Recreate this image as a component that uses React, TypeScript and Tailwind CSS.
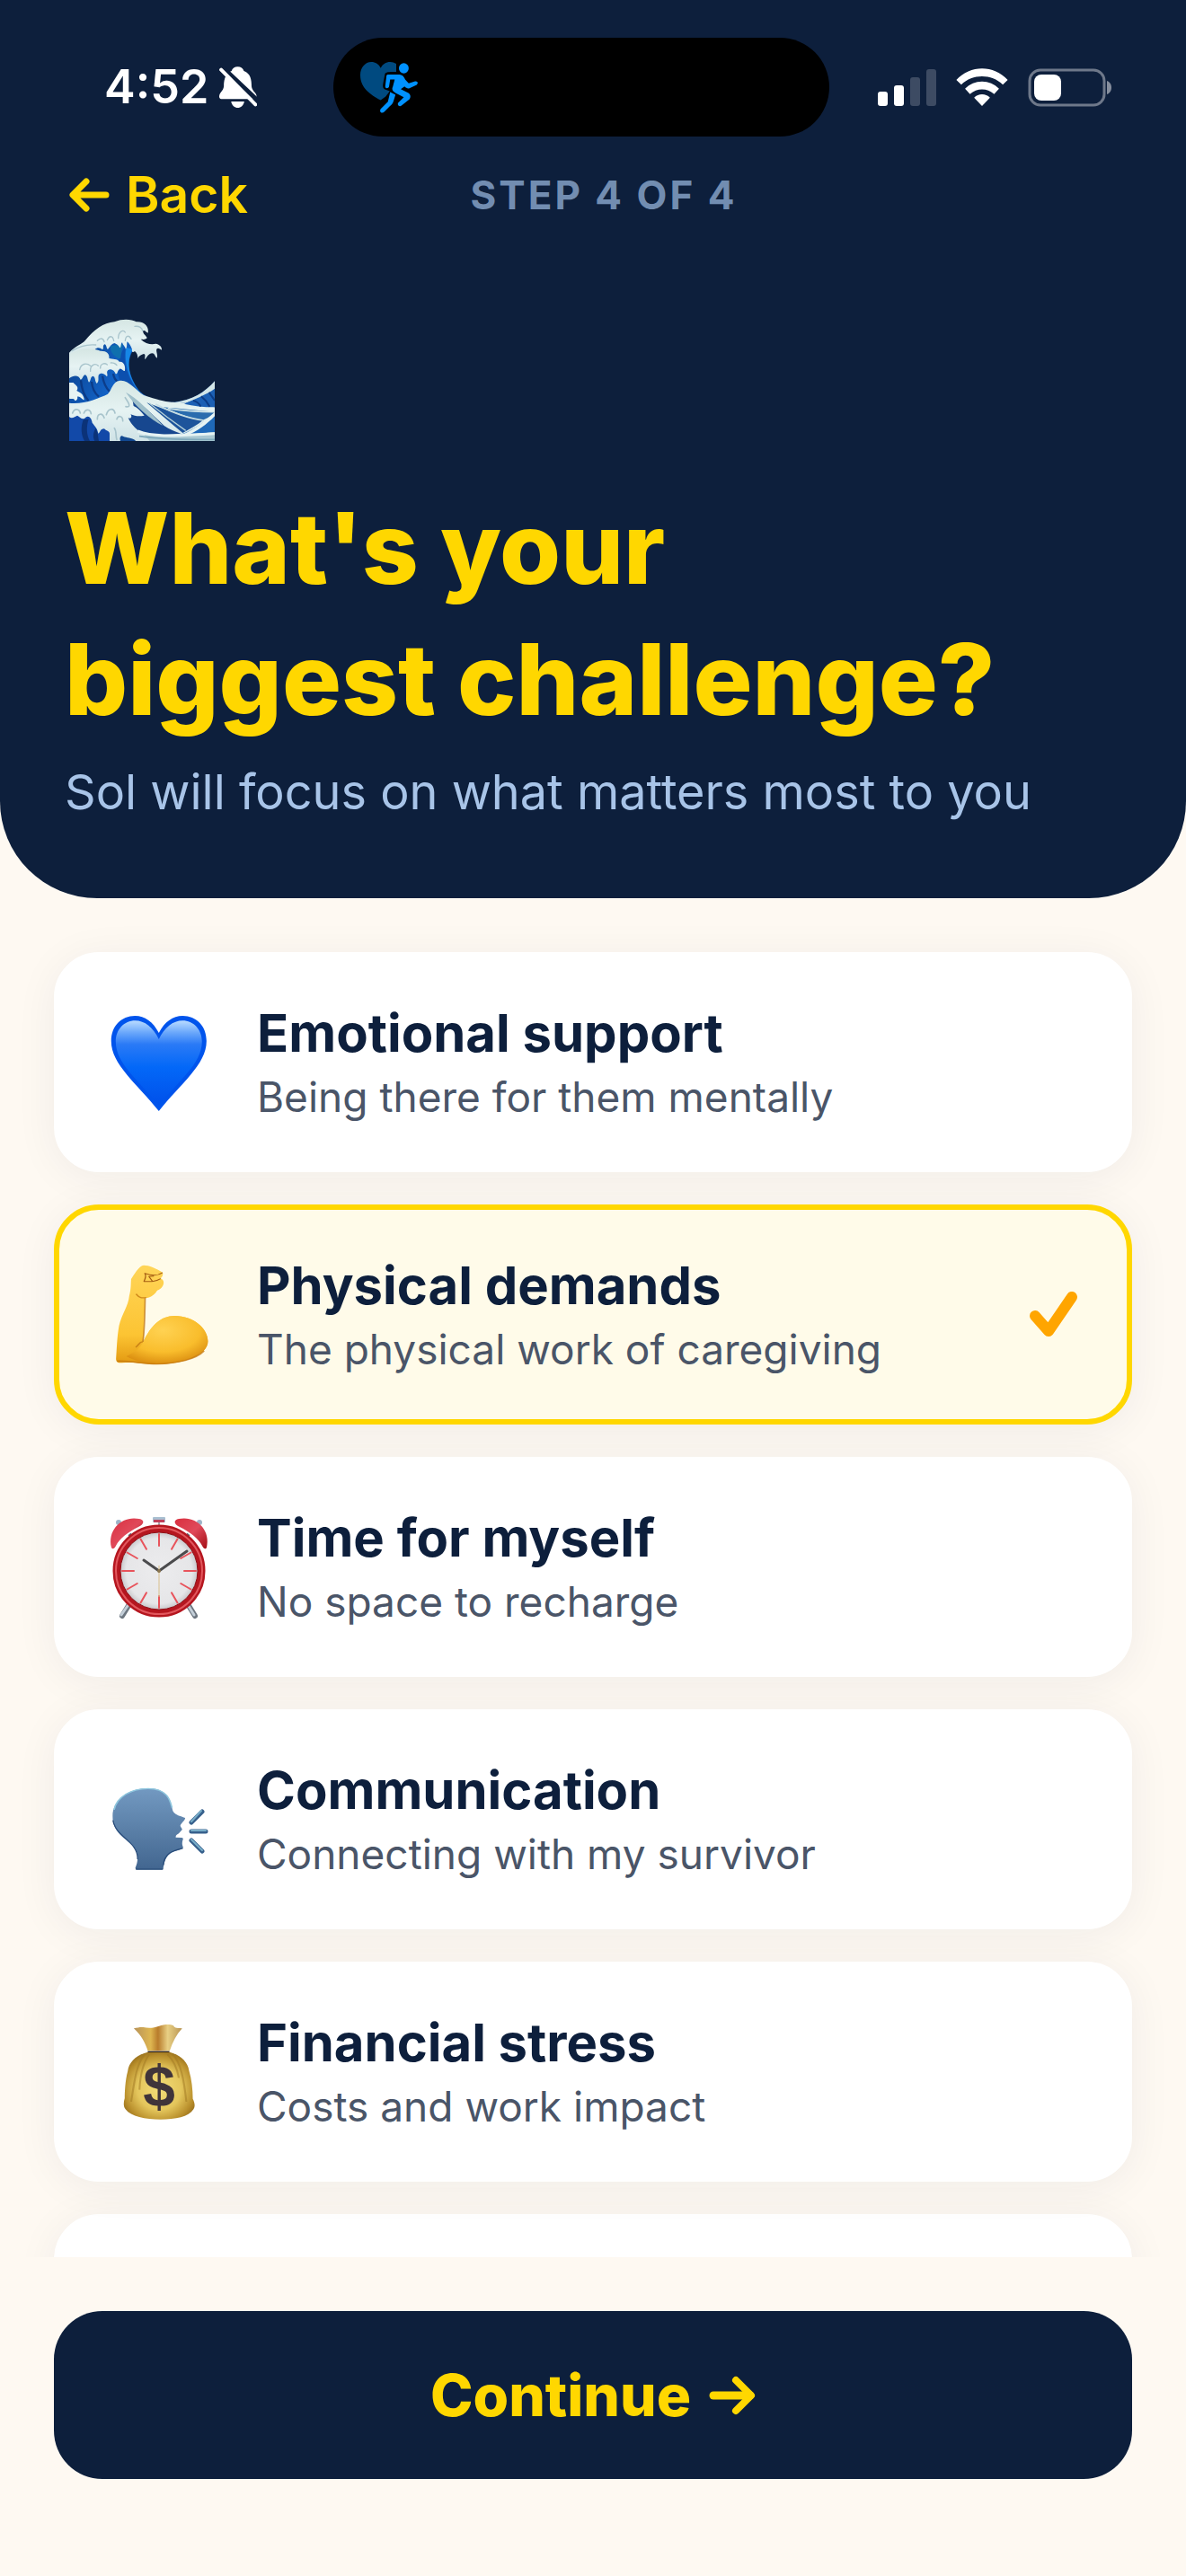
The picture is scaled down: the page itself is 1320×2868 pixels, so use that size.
import React, { useState } from "react";

type Challenge = {
  id: string;
  title: string;
  subtitle: string;
  icon: React.ReactNode;
};

const SilentBellIcon = () => (
  <svg width="42" height="46" viewBox="580 225 98 138" preserveAspectRatio="none" aria-hidden="true">
    <path
      d="M628 226C620 226 614 231 612 240C594 249 592 275 592 290C591 308 580 310 580 326C580 331 583 334 588 334H668C674 334 678 331 677 325C677 312 665 308 664 292C664 270 662 249 644 240C642 231 636 226 628 226Z"
      fill="#fff"
    />
    <path d="M611 342H645C643 356 636 363 628 363C620 363 613 356 611 342Z" fill="#fff" />
    <path d="M584 222L684 344" stroke="#0d1f3c" strokeWidth="5" vectorEffect="non-scaling-stroke" />
    <path
      d="M585 236L674 352"
      stroke="#fff"
      strokeWidth="4"
      strokeLinecap="round"
      vectorEffect="non-scaling-stroke"
    />
  </svg>
);

const WorkoutIcon = () => (
  <svg width="64" height="57" viewBox="953 203 152 170" preserveAspectRatio="none" aria-hidden="true">
    <path
      d="M1007 223C1002 210 993 203 982 203C966 203 953 222 953 246C953 290 980 311 1007 330L1020 318L1031 300L1018 294C1012 290 1012 282 1014 270L1018 244C1019 237 1026 235 1048 236V209C1043 205 1038 203 1032 203C1021 203 1012 210 1007 223Z"
      fill="#004a80"
    />
    <ellipse cx="1068" cy="224" rx="13" ry="17" fill="#0091ff" />
    <path
      d="M1026 245H1056C1066 246 1069 255 1072 262L1081 274L1098 267C1105 266 1107 274 1102 279L1083 290C1078 292 1074 289 1070 284L1060 293L1080 306C1086 311 1087 319 1083 327L1062 348C1056 353 1050 346 1053 339L1068 320L1046 306C1037 300 1036 292 1039 285L1044 261H1032L1029 285C1027 292 1018 292 1019 283L1022 252C1022 248 1023 245 1026 245Z"
      fill="#0091ff"
    />
    <path
      d="M1032 303L1046 312L1041 332C1039 341 1036 345 1031 350L1017 368C1010 377 1002 368 1007 359L1026 335Z"
      fill="#0091ff"
    />
  </svg>
);

const SignalIcon = () => (
  <svg width="65" height="41" viewBox="0 0 65 41" aria-hidden="true">
    <rect x="0" y="25" width="11" height="16" rx="3" fill="#fff" />
    <rect x="18" y="18" width="11" height="23" rx="3" fill="#fff" />
    <rect x="36" y="9" width="11" height="32" rx="3" fill="#3d4b63" />
    <rect x="54" y="0" width="11" height="41" rx="3" fill="#3d4b63" />
  </svg>
);

const WifiIcon = () => (
  <svg width="58" height="42" viewBox="961 225 138 126" preserveAspectRatio="none" aria-hidden="true">
    <g fill="#fff">
      <path d="M962 264C999 213 1061 213 1098 264L1085 280C1055 243 1005 243 975 280Z" />
      <path d="M985 293C1009 261 1051 261 1075 293L1062 311C1043 290 1017 290 998 311Z" />
      <path d="M1009 323C1020 308 1040 308 1051 323L1030 351Z" />
    </g>
  </svg>
);

const BatteryIcon = () => (
  <svg width="94" height="43" viewBox="0 0 94 43" aria-hidden="true">
    <rect x="2" y="2" width="83" height="39" rx="12" fill="none" stroke="#6e788a" strokeWidth="3" />
    <rect x="7" y="7" width="30" height="29" rx="8" fill="#fff" />
    <path d="M88 14C91 15 93 18 93 21.500C93 25 91 28 88 29Z" fill="#868e9d" />
  </svg>
);

const WaveIcon = () => (
  <svg width="162" height="136" viewBox="111 105 486 408" aria-hidden="true">
    <defs>
      <linearGradient id="waveDeep" x1="0" y1="0" x2="1" y2="0.400">
        <stop offset="0" stopColor="#0b3f88" />
        <stop offset="0.400" stopColor="#1261c4" />
        <stop offset="1" stopColor="#164e9e" />
      </linearGradient>
      <linearGradient id="waveFoam" x1="0" y1="0" x2="0" y2="1">
        <stop offset="0" stopColor="#d5e6e3" />
        <stop offset="0.500" stopColor="#e6f3f3" />
        <stop offset="1" stopColor="#cfe2e6" />
      </linearGradient>
    </defs>
    <path
      d="M111 230L200 170L300 175L328 205C302 240 304 290 345 345C380 380 430 385 462 383C520 378 565 350 597 313V513H111Z"
      fill="url(#waveDeep)"
    />
    <path d="M300 195C288 250 305 310 352 358C322 335 300 320 282 314C265 280 275 225 300 195Z" fill="#0c4fae" />
    <path d="M322 208C302 245 304 295 350 355C322 325 290 260 302 200Z" fill="#1687e6" />
    <path d="M250 195C245 215 262 235 282 238L290 190Z" fill="#0f6fae" />
    <g fill="none" stroke="#0a2f74" strokeWidth="7" opacity="0.700">
      <path d="M150 310C152 335 160 360 175 378" />
      <path d="M186 315C188 340 198 355 210 365" />
      <path d="M222 296C226 320 236 338 246 348" />
      <path d="M258 288C260 300 266 310 272 314" />
    </g>
    <path
      d="M111 218C130 198 150 190 162 180C195 140 225 118 262 115C290 103 320 106 335 115C362 113 378 130 374 152C368 150 365 142 358 144C355 155 368 160 371 169C364 176 356 173 350 173C365 188 385 192 400 188C412 190 421 198 420 209C414 206 408 200 403 206C400 214 408 224 404 236C397 231 397 220 388 220C376 221 373 230 364 241C362 232 368 225 360 222C352 225 344 228 340 237C340 226 337 219 330 213C324 219 319 216 321 207C317 195 312 188 305 181C302 190 306 198 300 206C297 196 290 193 288 184C282 188 286 198 280 202C276 193 268 188 262 186C252 188 246 200 240 207C234 202 237 192 229 190C221 195 228 203 222 208C215 200 204 200 197 207L160 235L111 235Z"
      fill="url(#waveFoam)"
    />
    <path
      d="M111 225C140 202 190 202 215 212C235 211 247 222 244 236C255 241 272 236 279 249C290 246 300 260 297 278C291 283 288 270 280 272C270 279 275 288 266 289C262 278 253 270 241 276C233 283 242 292 237 298C228 286 215 284 209 293C207 305 212 312 203 321C195 311 200 299 190 296C181 298 184 312 177 317C171 308 174 296 164 292C155 295 158 306 149 308C144 294 128 290 111 304Z"
      fill="url(#waveFoam)"
    />
    <path
      d="M111 318L125 318C130 325 146 332 136 345C146 350 160 356 161 376C151 373 148 362 138 365C141 372 135 379 130 378C127 368 118 374 111 371Z"
      fill="#e6f3f3"
    />
    <g fill="none" stroke="#a8c4cc" strokeWidth="4" strokeLinecap="round">
      <path d="M205 178C215 168 225 168 228 182M238 176C245 160 256 160 260 178M275 170C275 150 290 138 298 150M298 178C300 160 310 158 318 172" />
      <path d="M146 275C150 255 168 250 182 262M182 280C180 262 196 250 208 262M215 270C214 256 228 250 238 258M250 252C256 250 266 254 270 260" />
      <path d="M120 212C145 196 175 190 200 192M330 130C345 128 355 135 356 145" />
    </g>
    <path
      d="M111 386C160 392 210 370 240 356C256 338 256 311 285 311C312 312 332 342 360 360C420 380 440 384 480 384L597 400V513H111Z"
      fill="url(#waveFoam)"
    />
    <path
      d="M111 432C120 440 130 432 138 428C148 432 155 446 166 434C176 426 186 436 188 452C198 466 205 470 208 488C216 484 214 472 228 472C236 482 248 478 246 492V513H111Z"
      fill="#1249a8"
    />
    <path d="M158 442C148 470 152 495 162 513H180C168 490 168 465 176 440ZM200 470C190 485 190 500 196 513H210L206 488Z" fill="#0b3278" />
    <path d="M282 513C278 500 284 492 292 498C302 502 320 502 332 511V513Z" fill="#124890" />
    <path
      d="M322 372C350 385 395 430 428 462C445 474 465 482 484 488C440 492 390 494 362 490C338 480 318 458 308 436C318 440 322 432 316 424C330 430 345 432 362 428C350 414 340 402 326 396Z"
      fill="#17478f"
    />
    <path d="M300 350C335 368 385 418 424 462C380 440 330 395 300 350Z" fill="#9fbfca" />
    <path d="M370 385C430 405 500 440 560 442C540 460 512 474 490 486C450 455 410 418 370 385Z" fill="#1d549b" />
    <path d="M425 400C480 405 550 412 597 416V422C580 432 565 440 555 444C520 438 470 420 425 400Z" fill="#2a6cae" />
    <path d="M378 386C420 420 460 450 500 478" fill="none" stroke="#b4d0d8" strokeWidth="4" />
    <path d="M400 390C455 418 505 438 560 444" fill="none" stroke="#c6dde2" strokeWidth="5" />
    <path d="M440 404C490 412 545 416 597 416" fill="none" stroke="#d3e6e8" strokeWidth="5" />
    <path d="M597 422C560 450 525 478 480 492C535 490 570 486 597 484Z" fill="#1f69b8" />
    <path d="M484 493C540 470 570 440 597 416V430C570 458 540 480 500 496Z" fill="#e6f3f3" />
    <path d="M362 492C440 500 530 488 597 484V513H380Z" fill="#a9c8d2" />
    <path d="M340 480C400 505 500 492 597 488" fill="none" stroke="#e6f3f3" strokeWidth="9" />
    <path d="M345 497C420 508 500 508 597 508" fill="none" stroke="#7fa9bb" strokeWidth="5" />
    <g fill="none" stroke="#a8c4cc" strokeWidth="5" strokeLinecap="round">
      <path d="M122 420C128 402 145 405 148 420M160 420C166 404 182 406 184 422M205 440C205 420 222 418 228 436M235 425C242 402 260 402 264 420M270 440C275 425 290 430 290 446" />
      <path d="M262 470C270 480 265 495 270 508M298 368C312 388 318 402 300 398" />
    </g>
    <path d="M462 384C520 378 565 350 597 313V345C570 360 540 372 500 386Z" fill="#d3e6e8" />
    <path d="M495 389C530 372 570 358 597 338V400C560 400 525 396 495 389Z" fill="#1c60b4" />
    <path d="M525 378C535 380 545 388 550 398M552 364C562 372 572 384 580 398M578 350C584 360 592 370 597 378" fill="none" stroke="#0c3c86" strokeWidth="6" />
  </svg>
);

const HeartIcon = () => (
  <svg className="block size-28 overflow-visible" viewBox="0 0 112 112" aria-hidden="true">
    <defs>
      <linearGradient id="heartFill" x1="0" y1="0" x2="0" y2="1">
        <stop offset="0" stopColor="#b9dbff" />
        <stop offset="0.140" stopColor="#6ba8fb" />
        <stop offset="0.280" stopColor="#2a7af6" />
        <stop offset="0.550" stopColor="#0368f8" />
        <stop offset="1" stopColor="#0050ea" />
      </linearGradient>
    </defs>
    <g transform="translate(-80 -87) scale(0.4209 0.3333)">
      <path
        d="M325 330C310 293 288 273 262 273C226 273 199 307 199 357C199 436 268 500 325 591C382 500 451 436 451 357C451 307 424 273 388 273C362 273 340 293 325 330Z"
        fill="#0054ec"
      />
      <path
        d="M325 351C310 312 288 289 262 289C234 289 211 318 211 359C211 434 274 490 325 572C376 490 439 434 439 359C439 318 416 289 388 289C362 289 340 312 325 351Z"
        fill="url(#heartFill)"
      />
    </g>
  </svg>
);

const MuscleIcon = () => (
  <svg className="block size-28 overflow-visible" viewBox="0 0 112 112" aria-hidden="true">
    <defs>
      <linearGradient id="armFill" x1="0" y1="0" x2="0" y2="1">
        <stop offset="0" stopColor="#ffd558" />
        <stop offset="0.700" stopColor="#fcc433" />
        <stop offset="1" stopColor="#e29810" />
      </linearGradient>
      <radialGradient id="bicepFill" cx="0.450" cy="0.300" r="0.700">
        <stop offset="0" stopColor="#ffd252" />
        <stop offset="0.650" stopColor="#f9bd2c" />
        <stop offset="1" stopColor="#dd9112" />
      </radialGradient>
    </defs>
    <g transform="translate(-70 -88) scale(0.4209 0.3333)">
      <path
        d="M262 266C252 266 243 282 228 312C227 330 228 345 223 368C221 400 203 430 196 468C190 510 190 550 188 578C188 589 192 592 203 592C240 588 255 597 296 597C370 597 431 565 431 520C431 478 394 435 343 435C306 435 280 468 260 522C262 470 264 420 265 376C283 374 292 360 297 350C309 346 314 332 314 324C314 316 310 313 306 310C312 303 313 295 311 290C294 276 275 266 262 266Z"
        fill="url(#armFill)"
      />
      <path
        d="M343 435C306 435 280 468 260 522C250 548 232 560 215 570C240 586 260 594 296 595C370 596 431 565 431 520C431 478 394 435 343 435Z"
        fill="url(#bicepFill)"
      />
      <path d="M265 376C264 430 264 480 259 522M259 522C250 520 248 534 240 540" fill="none" stroke="#b86d10" strokeWidth="4" opacity="0.700" />
      <path d="M241 362C250 376 256 376 268 374M190 586C230 584 260 596 296 596C350 594 400 580 421 552" fill="none" stroke="#c47810" strokeWidth="4" opacity="0.800" />
      <path
        d="M311 291C300 301 285 303 264 293C270 302 264 312 262 320C276 320 288 324 306 311M284 319L275 304L288 302"
        fill="none"
        stroke="#a45c12"
        strokeWidth="3"
        strokeLinejoin="round"
      />
    </g>
  </svg>
);

const CLOCK_TICKS = [0, 30, 60, 90, 120, 150, 180, 210, 240, 270, 300, 330];

const AlarmIcon = () => (
  <svg className="block size-28 overflow-visible" viewBox="0 0 112 112" aria-hidden="true">
    <defs>
      <linearGradient id="bellFill" x1="0" y1="0" x2="1" y2="1">
        <stop offset="0" stopColor="#d92f3f" />
        <stop offset="0.500" stopColor="#e0495a" />
        <stop offset="1" stopColor="#a30d14" />
      </linearGradient>
      <radialGradient id="clockFace" cx="0.500" cy="0.500" r="0.500">
        <stop offset="0" stopColor="#ececee" />
        <stop offset="0.850" stopColor="#e6e6e8" />
        <stop offset="1" stopColor="#c9c9cc" />
      </radialGradient>
    </defs>
    <path d="M24 97L16 110M89 97L97 110" stroke="#6d7680" strokeWidth="6" strokeLinecap="round" />
    <path d="M24 96L15 109M88 96L96 109" stroke="#c3ced8" strokeWidth="3" strokeLinecap="round" />
    <path d="M57 4V14" stroke="#a6a6ae" strokeWidth="2" />
    <rect x="50" y="0" width="14" height="6" rx="1" fill="#a9bfd1" />
    <rect x="51" y="3" width="12" height="3" fill="#c0405a" />
    <circle cx="12" cy="6" r="3" fill="#9db4c8" />
    <circle cx="102" cy="6" r="3" fill="#9db4c8" />
    <path d="M4 34C-1 14 16-2 35 2C41 3 41 8 34 11C22 17 13 24 9 32C7 36 5 36 4 34Z" fill="url(#bellFill)" />
    <path d="M110 34C115 14 98-2 79 2C73 3 73 8 80 11C92 17 101 24 105 32C107 36 109 36 110 34Z" fill="url(#bellFill)" />
    <path d="M24 19L30 26M90 19L84 26" stroke="#596573" strokeWidth="4" />
    <circle cx="57" cy="60" r="47" fill="#fff" stroke="#b5161f" strokeWidth="9" />
    <circle cx="57" cy="60" r="48" fill="none" stroke="#e2575d" strokeWidth="2" />
    <circle cx="57" cy="60" r="43" fill="url(#clockFace)" stroke="#8e1017" strokeWidth="1" />
    {CLOCK_TICKS.map((angle) => (
      <path
        key={angle}
        d="M57 19V32"
        stroke="#e8535b"
        strokeWidth="2"
        strokeLinecap="round"
        transform={`rotate(${angle} 57 60)`}
      />
    ))}
    <path d="M57 60L40 48M57 60L88 38" stroke="#4b4b4d" strokeWidth="3" strokeLinecap="round" />
    <path d="M57 54V89" stroke="#d9c08c" strokeWidth="1" />
    <circle cx="57" cy="60" r="2" fill="#8b7650" />
  </svg>
);

const SpeakingIcon = () => (
  <svg className="block size-28 overflow-visible" viewBox="0 0 112 112" aria-hidden="true">
    <defs>
      <linearGradient id="headFill" x1="0" y1="0" x2="0" y2="1">
        <stop offset="0" stopColor="#7299c1" />
        <stop offset="0.500" stopColor="#5b80a8" />
        <stop offset="1" stopColor="#426690" />
      </linearGradient>
    </defs>
    <g transform="translate(-70 -80) scale(0.4209 0.3333)">
      <path
        d="M273 303C220 303 179 342 179 396C179 475 247 478 245 535C245 550 242 560 239 569C240 574 242 575 246 575H308C312 575 313 573 313 569C316 545 322 518 350 511C362 508 366 504 365 498C362 490 363 484 364 478C366 472 366 469 362 468L346 467C345 460 350 457 354 454L363 441C363 436 359 433 358 428C359 420 370 412 371 402C362 396 345 394 339 380C333 362 335 303 273 303Z"
        fill="url(#headFill)"
      />
      <path d="M183 375C190 330 230 304 273 304C326 304 332 348 336 368" fill="none" stroke="#8fc7de" strokeWidth="4" />
      <path d="M180 410C186 465 247 480 245 540M240 573H312M365 503C335 512 316 520 313 560" fill="none" stroke="#274a78" strokeWidth="3" />
    </g>
    <g strokeLinecap="round" fill="none">
      <path d="M93 59L105 47M93 69H109M93 79L105 91" stroke="#37608c" strokeWidth="5" />
      <path d="M93 58L104 46M93 68H109M93 78L105 90" stroke="#78adc8" strokeWidth="2" />
    </g>
  </svg>
);

const MoneyBagIcon = () => (
  <svg className="block size-28 overflow-visible" viewBox="0 0 112 112" aria-hidden="true">
    <defs>
      <radialGradient id="bagFill" cx="0.500" cy="0.550" r="0.620">
        <stop offset="0" stopColor="#f3dc78" />
        <stop offset="0.500" stopColor="#e4c65c" />
        <stop offset="0.800" stopColor="#b98f2c" />
        <stop offset="1" stopColor="#8c6416" />
      </radialGradient>
      <linearGradient id="bagNeck" x1="0" y1="0" x2="1" y2="0">
        <stop offset="0" stopColor="#b8935a" />
        <stop offset="0.350" stopColor="#deb650" />
        <stop offset="0.500" stopColor="#b87c2c" />
        <stop offset="0.700" stopColor="#e8cf84" />
        <stop offset="1" stopColor="#b89452" />
      </linearGradient>
    </defs>
    <g transform="translate(-70 -71) scale(0.4209 0.3333)">
      <path
        d="M235 235C245 232 252 230 260 231C275 235 290 233 302 227C315 221 332 220 340 226C342 232 345 234 363 235C348 255 338 280 330 310H272C266 285 255 258 235 235Z"
        fill="url(#bagNeck)"
      />
      <path
        d="M272 314C245 322 222 345 219 378C212 410 211 450 211 468C207 485 208 498 213 505C228 530 265 539 306 539C345 539 380 532 393 505C398 495 396 482 391 470C391 440 388 405 381 376C378 345 355 322 330 314Z"
        fill="url(#bagFill)"
      />
      <path
        d="M262 324C240 360 236 420 228 480M276 322C262 345 252 390 250 440M338 322C360 350 368 410 374 480M324 322C340 342 350 370 354 400"
        fill="none"
        stroke="#9f7722"
        strokeWidth="5"
        opacity="0.500"
      />
      <path d="M272 313H329" stroke="#2c2018" strokeWidth="4" />
    </g>
    <text
      x="57"
      y="94"
      textAnchor="middle"
      fill="#40343a"
      className="font-['Liberation_Sans',sans-serif] text-[64px] font-bold"
    >
      $
    </text>
  </svg>
);

const CheckIcon = () => (
  <svg className="block shrink-0" width="54" height="51" viewBox="0 0 54 51" aria-hidden="true">
    <path
      d="M6 27L21 44L47 6"
      fill="none"
      stroke="#ffa500"
      strokeWidth="12"
      strokeLinecap="round"
      strokeLinejoin="round"
    />
  </svg>
);

const challenges: Challenge[] = [
  {
    id: "emotional",
    title: "Emotional support",
    subtitle: "Being there for them mentally",
    icon: <HeartIcon />,
  },
  {
    id: "physical",
    title: "Physical demands",
    subtitle: "The physical work of caregiving",
    icon: <MuscleIcon />,
  },
  {
    id: "time",
    title: "Time for myself",
    subtitle: "No space to recharge",
    icon: <AlarmIcon />,
  },
  {
    id: "communication",
    title: "Communication",
    subtitle: "Connecting with my survivor",
    icon: <SpeakingIcon />,
  },
  {
    id: "financial",
    title: "Financial stress",
    subtitle: "Costs and work impact",
    icon: <MoneyBagIcon />,
  },
];

type ChallengeCardProps = {
  challenge: Challenge;
  selected: boolean;
  onSelect: () => void;
};

const ChallengeCard: React.FC<ChallengeCardProps> = ({
  challenge,
  selected,
  onSelect,
}) => (
  <label
    className={`relative flex shrink-0 cursor-pointer items-center gap-[54px] rounded-[50px] border-[6px] px-[54px] py-12 shadow-[0_6px_48px_rgba(13,31,60,0.06)] ${
      selected ? "border-[#ffd700] bg-[#fffbe9]" : "border-white bg-white"
    }`}
  >
    <input
      type="radio"
      name="challenge"
      value={challenge.id}
      checked={selected}
      onChange={onSelect}
      className="sr-only"
    />
    <span className="shrink-0">{challenge.icon}</span>
    <span className="flex flex-1 flex-col gap-[5px]">
      <span className="text-[58px] leading-[72px] font-bold text-[#0d1f3c]">
        {challenge.title}
      </span>
      <span className="text-[46px] leading-[60px] text-[#4a5568]">
        {challenge.subtitle}
      </span>
    </span>
    {selected && <CheckIcon />}
  </label>
);

const App: React.FC = () => {
  const [selectedId, setSelectedId] = useState("physical");

  return (
    <div className="flex h-screen flex-col bg-[#fef9f2] font-['Inter',sans-serif]">
      <header className="rounded-b-[108px] bg-[#0d1f3c] pt-[42px] pb-[82px]">
        <div className="flex h-[110px] items-center pr-[82px] pl-[116px] text-white">
          <div className="flex flex-1 items-center gap-3">
            <span className="text-[52px] leading-[60px] font-semibold">4:52</span>
            <SilentBellIcon />
          </div>
          <div className="flex h-full w-[552px] items-center rounded-full bg-black pl-[30px]">
            <WorkoutIcon />
          </div>
          <div className="ml-[54px] flex items-center gap-[22px]">
            <SignalIcon />
            <WifiIcon />
            <BatteryIcon />
          </div>
        </div>

        <nav className="mt-[29px] flex items-center justify-between px-[72px]">
          <button
            type="button"
            className="flex items-center gap-[18px] pl-[5px] text-[57px] leading-[72px] font-semibold text-[#ffd700]"
          >
            <svg width="45" height="38" viewBox="0 0 45 38" fill="none" aria-hidden="true">
              <path
                d="M41 19H5M19 4L4 19L19 34"
                stroke="currentColor"
                strokeWidth="7"
                strokeLinecap="round"
                strokeLinejoin="round"
              />
            </svg>
            Back
          </button>
          <span className="text-[44px] leading-[60px] font-bold tracking-[3px] text-[#728db1]">
            STEP 4 OF 4
          </span>
          <span className="w-[180px]" />
        </nav>

        <div className="mt-[102px] px-[72px]">
          <div className="pl-[5px]">
            <WaveIcon />
          </div>
          <h1 className="mt-[46px] text-[110px] leading-[146px] font-extrabold text-[#ffd700]">
            What's your
            <br />
            biggest challenge?
          </h1>
          <p className="mt-[17px] text-[54px] leading-[72px] text-[#a8c4e8]">
            Sol will focus on what matters most to you
          </p>
        </div>
      </header>

      <main className="flex min-h-0 flex-1 flex-col gap-9 overflow-hidden px-[60px] pt-[60px]">
        {challenges.map((challenge) => (
          <ChallengeCard
            key={challenge.id}
            challenge={challenge}
            selected={challenge.id === selectedId}
            onSelect={() => setSelectedId(challenge.id)}
          />
        ))}
        {/* next card peeks out above the footer */}
        <div className="h-[245px] shrink-0 rounded-[50px] bg-white shadow-[0_6px_48px_rgba(13,31,60,0.06)]" />
      </main>

      <footer className="px-[60px] pt-[60px] pb-[108px]">
        <button
          type="button"
          className="flex w-full items-center justify-center gap-[20px] rounded-[54px] bg-[#0d1f3c] py-[53px] text-[64px] leading-[81px] font-extrabold text-[#ffd700]"
        >
          Continue
          <svg width="52" height="44" viewBox="0 0 52 44" fill="none" aria-hidden="true">
            <path d="M5 22H46" stroke="currentColor" strokeWidth="9" strokeLinecap="round" />
            <path
              d="M30 5L47 22L30 39"
              stroke="currentColor"
              strokeWidth="8"
              strokeLinecap="round"
              strokeLinejoin="round"
            />
          </svg>
        </button>
      </footer>
    </div>
  );
};

export default App;
